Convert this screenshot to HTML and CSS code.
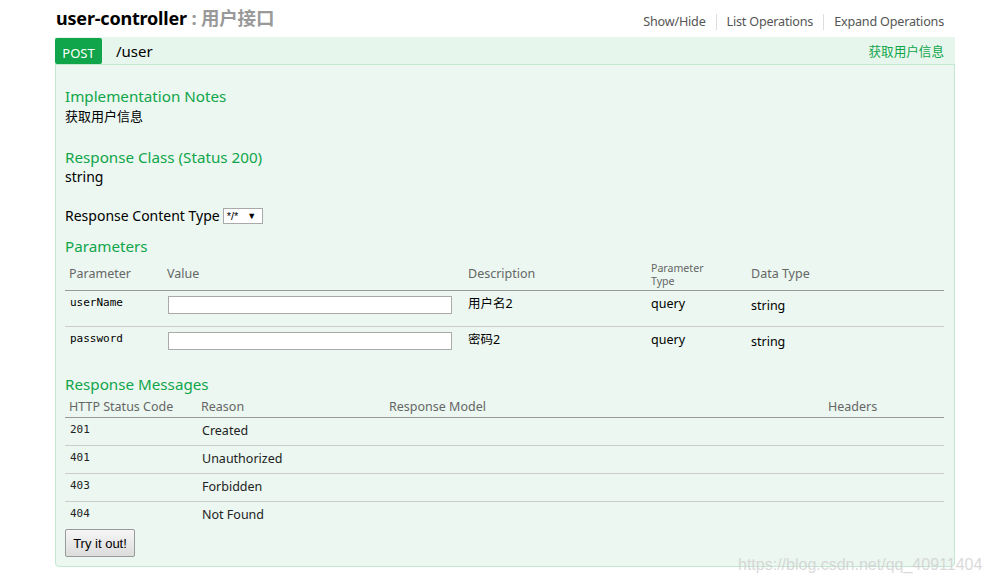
FILE: index.html
```html
<!DOCTYPE html>
<html>
<head>
<meta charset="utf-8">
<link rel="stylesheet" href="styles.css">
</head>
<body>
<div class="page">
  <div class="resource-head">
    <h2 class="title"><span class="name">user-controller</span><span class="desc"> : 用户接口</span></h2>
    <ul class="links">
      <li>Show/Hide</li>
      <li>List Operations</li>
      <li>Expand Operations</li>
    </ul>
  </div>
  <div class="op">
    <div class="op-head">
      <span class="verb">POST</span>
      <span class="path">/user</span>
      <span class="summary">获取用户信息</span>
    </div>
    <div class="op-body">
      <h4 class="sec first">Implementation Notes</h4>
      <div class="notes">获取用户信息</div>
      <h4 class="sec">Response Class (Status 200)</h4>
      <div class="rclass">string</div>
      <div class="ctype">Response Content Type <span class="select">*/* <span class="arrow">▼</span></span></div>
      <h4 class="sec params-h">Parameters</h4>
      <table class="tbl params">
        <colgroup><col class="c1"><col class="c2"><col class="c3"><col class="c4"><col></colgroup>
        <thead><tr><th>Parameter</th><th>Value</th><th>Description</th><th class="two"><span class="l">Parameter</span><span class="l">Type</span></th><th>Data Type</th></tr></thead>
        <tbody>
          <tr><td class="code">userName</td><td><span class="input"></span></td><td>用户名2</td><td>query</td><td class="dt">string</td></tr>
          <tr><td class="code">password</td><td><span class="input"></span></td><td>密码2</td><td>query</td><td class="dt">string</td></tr>
        </tbody>
      </table>
      <h4 class="sec msgs-h">Response Messages</h4>
      <table class="tbl msgs">
        <colgroup><col class="m1"><col class="m2"><col class="m3"><col></colgroup>
        <thead><tr><th>HTTP Status Code</th><th>Reason</th><th>Response Model</th><th>Headers</th></tr></thead>
        <tbody>
          <tr><td class="code">201</td><td>Created</td><td></td><td></td></tr>
          <tr><td class="code">401</td><td>Unauthorized</td><td></td><td></td></tr>
          <tr><td class="code">403</td><td>Forbidden</td><td></td><td></td></tr>
          <tr><td class="code">404</td><td>Not Found</td><td></td><td></td></tr>
        </tbody>
      </table>
      <button class="try">Try it out!</button>
    </div>
  </div>
</div>
<div class="watermark">https://blog.csdn.net/qq_40911404</div>
</body>
</html>
```
FILE: styles.css
```css
html, body { margin: 0; padding: 0; background: #fff; }
body {
  font-family: "Noto Sans", "Noto Sans CJK SC", sans-serif;
  color: #000;
  width: 990px;
  height: 585px;
  overflow: hidden;
  position: relative;
}
.page { padding: 0 35px 0 55px; }
.resource-head {
  display: flex;
  justify-content: space-between;
  align-items: flex-end;
  height: 37px;
  padding-left: 1px;
  box-sizing: border-box;
}
.title {
  margin: 0 0 7px 0;
  font-size: 18px;
  font-weight: bold;
  line-height: 24px;
  letter-spacing: -0.2px;
}
.title .name { color: #000; }
.title .desc { color: #999; font-size: 18.5px; }
.links {
  list-style: none;
  margin: 0 11px 7px 0;
  padding: 0;
  display: flex;
  font-size: 12.6px;
  letter-spacing: -0.2px;
  color: #555;
  line-height: 16px;
}
.links li { padding: 0 10px; border-left: 1px solid #ddd; }
.links li:first-child { border-left: none; }
.links li:last-child { padding-right: 0; }
.op {
  border: 1px solid #c3e8d1;
  border-radius: 0 0 4px 4px;
  background: #ebf7f0;
  height: 530px;
  box-sizing: border-box;
}
.op-head {
  display: flex;
  align-items: center;
  background: #e7f6ec;
  border-bottom: 1px solid #c3e8d1;
  height: 27px;
  margin: -1px -1px 0 -1px;
}
.verb {
  background: #10a54a;
  color: #fff;
  font-size: 13px;
  width: 47px;
  height: 24px;
  line-height: 26px;
  padding-top: 2px;
  margin-top: 1px;
  text-align: center;
  border-radius: 2px;
}
.path { margin-left: 14px; font-size: 15px; color: #000; padding-top: 1px; }
.summary { margin-left: auto; margin-right: 11px; font-size: 12.6px; color: #10a54a; }
.op-body { padding: 21px 10px 0 9px; }
.sec {
  margin: 0;
  font-size: 15.2px;
  font-weight: normal;
  color: #10a54a;
  line-height: 20px;
}
.notes { font-size: 13px; line-height: 20px; color: #000; }
.notes + .sec { margin-top: 21px; }
.rclass { font-size: 14px; line-height: 20px; margin-bottom: 19px; }
.ctype { font-size: 14px; line-height: 20px; display: flex; align-items: center; margin-top: 1px; }
.select {
  display: inline-flex;
  align-items: center;
  margin-left: 3px;
  border: 1px solid #aaa;
  background: #fff;
  height: 16px;
  width: 40px;
  box-sizing: border-box;
  font-size: 11px;
  padding-left: 3px;
  font-family: "Liberation Sans", sans-serif;
}
.select .arrow { margin-left: 9px; font-size: 9px; }
.params-h { margin-top: 10px; }
.tbl {
  width: 879px;
  border-collapse: collapse;
  table-layout: fixed;
}
.tbl th {
  text-align: left;
  font-weight: normal;
  color: #666;
  font-size: 12.5px;
  padding: 0 4px;
  border-bottom: 1px solid #999;
}
.params th { height: 26px; vertical-align: bottom; padding-bottom: 8px; }
.params th.two { font-size: 10.6px; line-height: 12px; padding-bottom: 3px; }
.params th.two .l { display: block; height: 12.5px; line-height: 12px; }
.params col.c1 { width: 98px; }
.params col.c2 { width: 301px; }
.params col.c3 { width: 183px; }
.params col.c4 { width: 100px; }
.params td {
  height: 36px;
  vertical-align: top;
  padding: 5px 4px 0 4px;
  font-size: 12.5px;
  line-height: 16px;
  border-bottom: 1px solid #ccc;
  box-sizing: border-box;
}
.params tbody tr:last-child td { border-bottom: none; }
.params td.dt { padding-top: 7px; }
.code { font-family: "DejaVu Sans Mono", monospace; font-size: 11px !important; }
.params td.code { padding-left: 5px; padding-top: 4px; }
.input {
  display: block;
  width: 284px;
  height: 18px;
  border: 1px solid #aaa;
  background: #fff;
  box-sizing: border-box;
  margin-left: 1px;
}
.msgs-h { margin-top: 11px; }
.msgs col.m1 { width: 132px; }
.msgs col.m2 { width: 188px; }
.msgs col.m3 { width: 439px; }
.msgs th { height: 21px; vertical-align: bottom; padding-bottom: 2px; }
.msgs td {
  height: 28px;
  padding: 0 4px 1px 5px;
  font-size: 12.5px;
  border-bottom: 1px solid #ccc;
  box-sizing: border-box;
  vertical-align: middle;
  color: #222;
}
.msgs td.code { vertical-align: top; padding-top: 5px; }
.msgs tbody tr:last-child td { border-bottom: none; }
.try {
  font-family: "Liberation Sans", sans-serif;
  font-size: 13px;
  width: 70px;
  height: 28px;
  border: 1px solid #999;
  border-radius: 2px;
  background: linear-gradient(#f6f6f6, #dcdcdc);
  color: #000;
  padding: 0;
}
.watermark {
  position: absolute;
  left: 738px;
  top: 556px;
  font-family: "Liberation Sans", sans-serif;
  font-size: 16px;
  color: rgba(205, 205, 205, 0.75);
}
```
